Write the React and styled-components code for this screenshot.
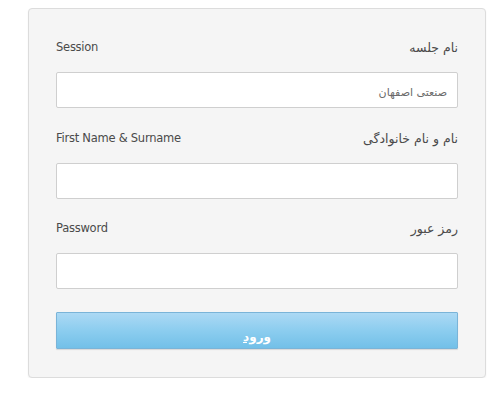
import React from "react";
import styled, { createGlobalStyle } from "styled-components";

const Global = createGlobalStyle`
  html, body { margin: 0; padding: 0; background: #ffffff; }
  body { font-family: "DejaVu Sans", "Liberation Sans", sans-serif; }
  * { box-sizing: border-box; }
`;

const Page = styled.div`
  padding: 8px 0 0 28px;
`;

const Panel = styled.form`
  width: 458px;
  height: 370px;
  background: #f5f5f5;
  border: 1px solid #dcdcdc;
  border-radius: 4px;
  box-shadow: 0 1px 2px rgba(0,0,0,0.06);
  padding: 30px 27px 0 27px;
  display: flex;
  flex-direction: column;
`;

const LabelRow = styled.div`
  display: flex;
  justify-content: space-between;
  align-items: center;
  height: 16px;
  margin-top: ${(p) => p.$top || 0}px;
  color: #4a4a4a;
`;

const EnLabel = styled.span`
  font-family: "DejaVu Sans", sans-serif;
  font-size: 11.5px;
  letter-spacing: -0.25px;
`;

const FaLabel = styled.span`
  font-family: "DejaVu Sans", "Noto Sans", sans-serif;
  font-size: 12.5px;
  direction: rtl;
`;

const Input = styled.input`
  display: block;
  width: 402px;
  height: 36px;
  margin-top: 17px;
  border: 1px solid #cfcfcf;
  border-radius: 2px;
  background: #ffffff;
  padding: 4px 10px 0 10px;
  font-family: "DejaVu Sans", sans-serif;
  font-size: 11px;
  color: #6a6a6a;
  direction: rtl;
  text-align: right;
  outline: none;
`;

const Button = styled.button`
  display: flex;
  align-items: flex-end;
  justify-content: center;
  width: 402px;
  height: 37px;
  margin-top: 23px;
  padding: 0 0 4px 0;
  border: 1px solid #7ab4d8;
  border-radius: 1px;
  background: linear-gradient(to bottom, #acd9f4 0%, #8ccdef 50%, #72c0e8 100%);
  box-shadow: 0 1px 1px rgba(0,0,0,0.12);
  color: #ffffff;
  font-family: "DejaVu Sans", sans-serif;
  font-size: 12px;
  font-weight: bold;
  text-decoration: underline;
  direction: rtl;
  cursor: pointer;
`;

export default function App() {
  return (
    <>
      <Global />
      <Page>
        <Panel onSubmit={(e) => e.preventDefault()}>
          <LabelRow>
            <EnLabel>Session</EnLabel>
            <FaLabel>نام جلسه</FaLabel>
          </LabelRow>
          <Input defaultValue="صنعتی اصفهان" />
          <LabelRow $top={22}>
            <EnLabel>First Name &amp; Surname</EnLabel>
            <FaLabel>نام و نام خانوادگی</FaLabel>
          </LabelRow>
          <Input />
          <LabelRow $top={21}>
            <EnLabel>Password</EnLabel>
            <FaLabel>رمز عبور</FaLabel>
          </LabelRow>
          <Input type="password" />
          <Button type="submit">ورود</Button>
        </Panel>
      </Page>
    </>
  );
}
